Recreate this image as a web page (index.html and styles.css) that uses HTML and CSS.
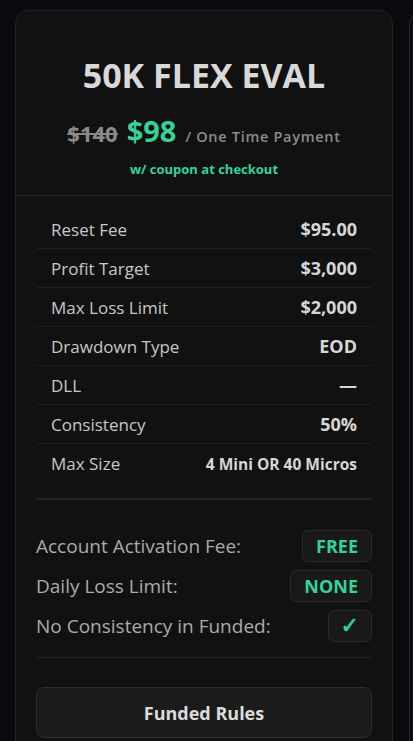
FILE: index.html
```html
<!DOCTYPE html>
<html lang="en">

<head>
    <meta charset="UTF-8">
    <title>50K Flex Eval</title>
    <link rel="stylesheet" href="styles.css">
</head>

<body>
    <div class="plans">
        <div class="card">
            <div class="card-head">
                <h2 class="title">50K FLEX EVAL</h2>
                <div class="price">
                    <span class="old">$140</span>
                    <span class="now">$98</span>
                    <span class="per">/ One Time Payment</span>
                </div>
                <div class="coupon">w/ coupon at checkout</div>
            </div>

            <div class="specs">
                <div class="row"><span>Reset Fee</span><b>$95.00</b></div>
                <div class="row"><span>Profit Target</span><b>$3,000</b></div>
                <div class="row"><span>Max Loss Limit</span><b>$2,000</b></div>
                <div class="row"><span>Drawdown Type</span><b>EOD</b></div>
                <div class="row"><span>DLL</span><b>&mdash;</b></div>
                <div class="row"><span>Consistency</span><b>50%</b></div>
                <div class="row"><span>Max Size</span><b class="small">4 Mini OR 40 Micros</b></div>
            </div>

            <div class="perks">
                <div class="perk"><span>Account Activation Fee:</span><em class="tag">FREE</em></div>
                <div class="perk"><span>Daily Loss Limit:</span><em class="tag">NONE</em></div>
                <div class="perk"><span>No Consistency in Funded:</span><em class="tag check">&#10003;</em></div>
            </div>

            <div class="foot">
                <button class="rules">Funded Rules</button>
            </div>
        </div>
        <div class="card next"></div>
    </div>
</body>

</html>
```

FILE: styles.css
```css
* {
    box-sizing: border-box;
}

body {
    margin: 0;
    background: #0a0b0f;
    font-family: "Open Sans", "Noto Sans", sans-serif;
    color: #d6d6d6;
    overflow: hidden;
}

.plans {
    display: flex;
    gap: 16px;
    padding: 10px 0 0 15px;
    width: 413px;
    overflow: hidden;
}

.card {
    flex: 0 0 378px;
    width: 378px;
    background: #111111;
    border: 1px solid #202126;
    border-radius: 14px;
    min-height: 760px;
}

.card.next {
    background: #0e0e10;
}

/* header */
.card-head {
    padding: 44px 0 17px;
    text-align: center;
    border-bottom: 1px solid #262626;
}

.title {
    margin: 0;
    font-size: 34px;
    font-weight: 700;
    line-height: 40px;
    color: #d9d9d9;
}

.price {
    margin-top: 16px;
    height: 40px;
    display: flex;
    justify-content: center;
    align-items: baseline;
    gap: 9px;
}

.old {
    font-size: 22px;
    font-weight: 700;
    color: #8a8a8a;
    text-decoration: line-through;
    text-decoration-thickness: 2px;
}

.now {
    font-size: 29px;
    font-weight: 700;
    color: #34d399;
}

.per {
    font-size: 14.5px;
    font-weight: 600;
    color: #8c8c8c;
    letter-spacing: 0.7px;
}

.coupon {
    margin-top: 9px;
    font-size: 13px;
    line-height: 18px;
    font-weight: 700;
    color: #34d399;
}

/* spec table */
.specs {
    margin: 0 20px;
    padding: 14px 0 15px;
    border-bottom: 2px solid #222222;
}

.row {
    display: flex;
    justify-content: space-between;
    align-items: center;
    height: 39px;
    padding: 0 15px;
    border-bottom: 1px solid #1e1e1e;
    font-size: 17px;
}

.row:last-child {
    border-bottom: none;
}

.row span {
    color: #c8c8c8;
}

.row b {
    font-weight: 700;
    color: #d6d6d6;
    font-size: 18px;
}

.row b.small {
    font-size: 15.5px;
}

/* perks */
.perks {
    margin: 0 20px;
    padding: 30px 0 15px;
    border-bottom: 1px solid #222222;
    display: flex;
    flex-direction: column;
    gap: 8px;
}

.perk {
    display: flex;
    justify-content: space-between;
    align-items: center;
    font-size: 19px;
    color: #ababab;
}

.tag {
    font-style: normal;
    font-weight: 700;
    font-size: 18px;
    color: #34d399;
    background: #191919;
    border: 1px solid #2a2a2a;
    border-radius: 6px;
    height: 32px;
    line-height: 30px;
    padding: 0 13px;
}

.tag.check {
    font-family: "DejaVu Sans", sans-serif;
    font-size: 22px;
    padding: 0 12px;
    -webkit-text-stroke: 0.6px #34d399;
}

.foot {
    padding: 29px 20px 0;
}

.rules {
    width: 100%;
    height: 51px;
    background: #1b1b1b;
    border: 1px solid #2e2e2e;
    border-radius: 8px;
    font-family: inherit;
    font-size: 18px;
    font-weight: 700;
    color: #dcdcdc;
}
```
